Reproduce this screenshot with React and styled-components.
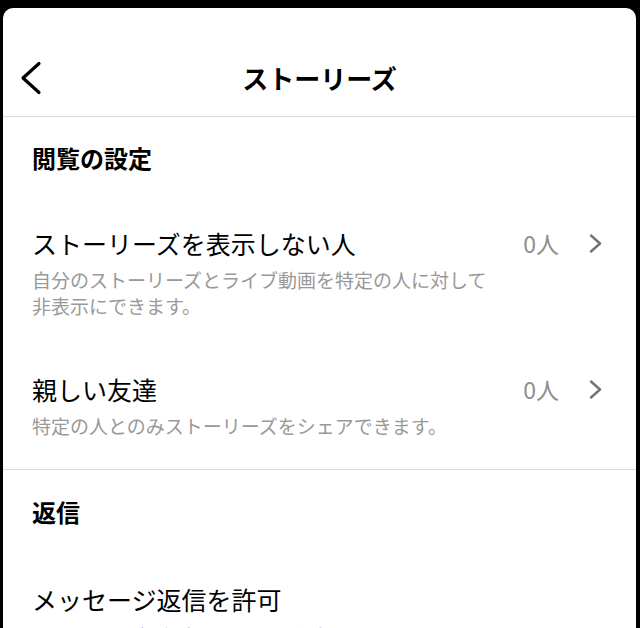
import React from 'react'
import styled, { createGlobalStyle } from 'styled-components'

const GlobalStyle = createGlobalStyle`
  html, body {
    margin: 0;
    padding: 0;
    background: #000;
    height: 100%;
    overflow: hidden;
  }
  body {
    font-family: "Noto Sans CJK JP", "Noto Sans", sans-serif;
    color: #000;
  }
`

const Panel = styled.div`
  margin: 8px 4px 0 3px;
  min-height: 700px;
  background: #fff;
  border-radius: 10px 10px 0 0;
`

const Header = styled.header`
  box-sizing: border-box;
  height: 109px;
  display: grid;
  grid-template-columns: 1fr auto 1fr;
  align-items: end;
  padding: 0 15px 16px;
  border-bottom: 1px solid #dbdbdb;
`

const BackButton = styled.button`
  justify-self: start;
  display: flex;
  align-items: center;
  height: 44px;
  padding: 0;
  border: none;
  background: transparent;
`

const Title = styled.h1`
  margin: 0;
  height: 44px;
  line-height: 44px;
  font-size: 26px;
  font-weight: 700;
`

const Section = styled.section`
  padding-bottom: 3px;
  border-bottom: ${({ $last }) => ($last ? 'none' : '1px solid #dbdbdb')};
`

const SectionTitle = styled.h2`
  margin: 0;
  padding: ${({ $first }) => ($first ? '25px 29px 26px' : '26px 29px 28px')};
  font-size: 24px;
  line-height: 32px;
  font-weight: 700;
`

const Row = styled.div`
  display: flex;
  align-items: flex-start;
  padding: 27px 33px 27px 29px;
`

const RowText = styled.div`
  flex: 1;
`

const RowLabel = styled.div`
  font-size: 25px;
  line-height: 32px;
`

const RowDesc = styled.p`
  margin: 8px 0 0;
  max-width: 460px;
  font-size: 19px;
  line-height: 26px;
  color: #999;
`

const RowValue = styled.div`
  display: flex;
  align-items: center;
  height: 32px;
  gap: 29px;
  font-size: 23px;
  color: #8e8e8e;
`

const Chevron = () => (
  <svg width="15" height="19" viewBox="0 0 15 19" fill="none">
    <path d="M3 1.5 L12 9.5 L3 17.5" stroke="#737373" strokeWidth="2.4" strokeLinecap="round" strokeLinejoin="round" />
  </svg>
)

const BackIcon = () => (
  <svg width="24" height="34" viewBox="0 0 24 34" fill="none">
    <path d="M21 2.5 L5 17 L21 31.5" stroke="#000" strokeWidth="3.2" strokeLinecap="round" strokeLinejoin="round" />
  </svg>
)

function SettingRow({ label, desc, value }) {
  return (
    <Row>
      <RowText>
        <RowLabel>{label}</RowLabel>
        <RowDesc>{desc}</RowDesc>
      </RowText>
      {value && (
        <RowValue>
          <span>{value}</span>
          <Chevron />
        </RowValue>
      )}
    </Row>
  )
}

export default function App() {
  return (
    <>
      <GlobalStyle />
      <Panel>
        <Header>
          <BackButton aria-label="戻る"><BackIcon /></BackButton>
          <Title>ストーリーズ</Title>
          <span />
        </Header>

        <Section>
          <SectionTitle $first>閲覧の設定</SectionTitle>
          <SettingRow
            label="ストーリーズを表示しない人"
            desc="自分のストーリーズとライブ動画を特定の人に対して非表示にできます。"
            value="0人"
          />
          <SettingRow
            label="親しい友達"
            desc="特定の人とのみストーリーズをシェアできます。"
            value="0人"
          />
        </Section>

        <Section $last>
          <SectionTitle>返信</SectionTitle>
          <SettingRow
            label="メッセージ返信を許可"
            desc="ストーリーズに返信できる人を選択できます。"
          />
        </Section>
      </Panel>
    </>
  )
}
